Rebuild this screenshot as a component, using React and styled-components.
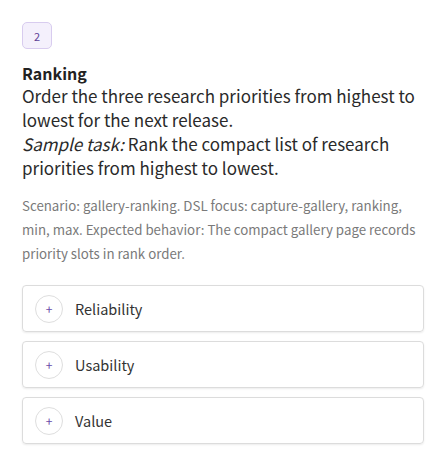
import React from "react";
import styled, { createGlobalStyle } from "styled-components";

const Global = createGlobalStyle`
  html, body { margin: 0; padding: 0; background: #ffffff; }
  body { font-family: "Noto Sans CJK KR", "Noto Sans", sans-serif; color: #222; }
`;

const Page = styled.div`
  padding: 22px 22px;
  display: flex;
  flex-direction: column;
`;

const Badge = styled.div`
  width: 30px;
  height: 27px;
  box-sizing: border-box;
  border: 1px solid #d8ccef;
  background: #f4f0fc;
  border-radius: 5px;
  color: #5f3f98;
  font-size: 11px;
  display: flex;
  align-items: center;
  justify-content: center;
`;

const Title = styled.div`
  margin-top: 13px;
  font-size: 16px;
  font-weight: 700;
  line-height: 22px;
  color: #222;
`;

const Prompt = styled.div`
  font-size: 17px;
  line-height: 24px;
  color: #2a2a2a;
`;

const Em = styled.em`
  font-style: italic;
`;

const Meta = styled.div`
  margin-top: 14px;
  font-size: 13.3px;
  line-height: 24px;
  color: #7a7a7a;
`;

const List = styled.div`
  margin-top: 19px;
  display: flex;
  flex-direction: column;
  gap: 9px;
`;

const Card = styled.div`
  height: 47px;
  box-sizing: border-box;
  border: 1px solid #dcdcdc;
  border-radius: 4px;
  box-shadow: 0 1px 2px rgba(0, 0, 0, 0.08);
  display: flex;
  align-items: center;
  padding-left: 12px;
  gap: 12px;
`;

const AddCircle = styled.div`
  width: 28px;
  height: 28px;
  box-sizing: border-box;
  border-radius: 50%;
  border: 1px solid #dedede;
  display: flex;
  align-items: center;
  justify-content: center;
  color: #6a4aa8;
  font-size: 12px;
`;

const Label = styled.span`
  font-size: 14.5px;
  color: #333;
`;

const items = ["Reliability", "Usability", "Value"];

export default function App() {
  return (
    <>
      <Global />
      <Page>
        <Badge>2</Badge>
        <Title>Ranking</Title>
        <Prompt>
          Order the three research priorities from highest to lowest for the next release.
          <br />
          <Em>Sample task:</Em> Rank the compact list of research priorities from highest to lowest.
        </Prompt>
        <Meta>
          Scenario: gallery-ranking. DSL focus: capture-gallery, ranking, min, max. Expected behavior: The compact gallery page records priority slots in rank order.
        </Meta>
        <List>
          {items.map((it) => (
            <Card key={it}>
              <AddCircle>+</AddCircle>
              <Label>{it}</Label>
            </Card>
          ))}
        </List>
      </Page>
    </>
  );
}
